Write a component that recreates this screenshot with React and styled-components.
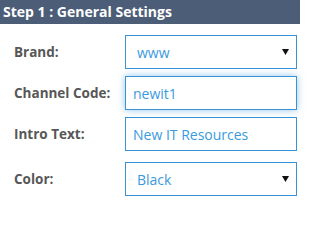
import React from 'react';
import styled, { createGlobalStyle } from 'styled-components';

const GlobalStyle = createGlobalStyle`
    html, body {
        margin: 0;
        padding: 0;
        background: #fff;
        font-family: "Open Sans", "Liberation Sans", sans-serif;
    }
`;

const Panel = styled.div`
    width: 300px;
`;

const Header = styled.div`
    height: 24px;
    line-height: 24px;
    background: #4c5e77;
    color: #fff;
    font-size: 14px;
    font-weight: 700;
    padding-left: 3px;
`;

const Form = styled.div`
    display: flex;
    flex-direction: column;
    gap: 7px;
    padding: 11px 3px 0 14px;
`;

const Row = styled.div`
    display: flex;
    align-items: center;
    height: 34px;
    margin-top: ${p => p.$extra || 0}px;
`;

const Label = styled.label`
    width: 111px;
    flex: none;
    font-size: 13.5px;
    font-weight: 700;
    color: #575757;
`;

const fieldBase = `
    box-sizing: border-box;
    width: 172px;
    height: 34px;
    border: 1px solid #3a93d6;
    background: #fff;
    color: #3a9ae0;
    font-family: "Open Sans", "Liberation Sans", sans-serif;
    font-size: 14px;
    outline: none;
    border-radius: 0;
`;

const Input = styled.input`
    ${fieldBase}
    padding: 0 7px;
    box-shadow: ${p => (p.$focused ? '0 0 7px rgba(58, 147, 214, 0.55)' : 'none')};
`;

const SelectWrap = styled.div`
    position: relative;
    width: 172px;
    height: 34px;
`;

const Select = styled.select`
    ${fieldBase}
    appearance: none;
    -webkit-appearance: none;
    padding: 0 24px 0 11px;
`;

const Arrow = styled.svg`
    position: absolute;
    right: 8px;
    top: 14px;
    pointer-events: none;
`;

const Dropdown = ({ value, options }) => (
    <SelectWrap>
        <Select defaultValue={value}>
            {options.map(o => <option key={o}>{o}</option>)}
        </Select>
        <Arrow width="7" height="6" viewBox="0 0 7 6">
            <polygon points="0,0 7,0 3.5,6" fill="#111" />
        </Arrow>
    </SelectWrap>
);

export default function App() {
    return (
        <Panel>
            <GlobalStyle />
            <Header>Step 1 : General Settings</Header>
            <Form>
                <Row>
                    <Label>Brand:</Label>
                    <Dropdown value="www" options={['www']} />
                </Row>
                <Row>
                    <Label>Channel Code:</Label>
                    <Input defaultValue="newit1" $focused />
                </Row>
                <Row>
                    <Label>Intro Text:</Label>
                    <Input defaultValue="New IT Resources" />
                </Row>
                <Row $extra={4}>
                    <Label>Color:</Label>
                    <Dropdown value="Black" options={['Black', 'White']} />
                </Row>
            </Form>
        </Panel>
    );
}
